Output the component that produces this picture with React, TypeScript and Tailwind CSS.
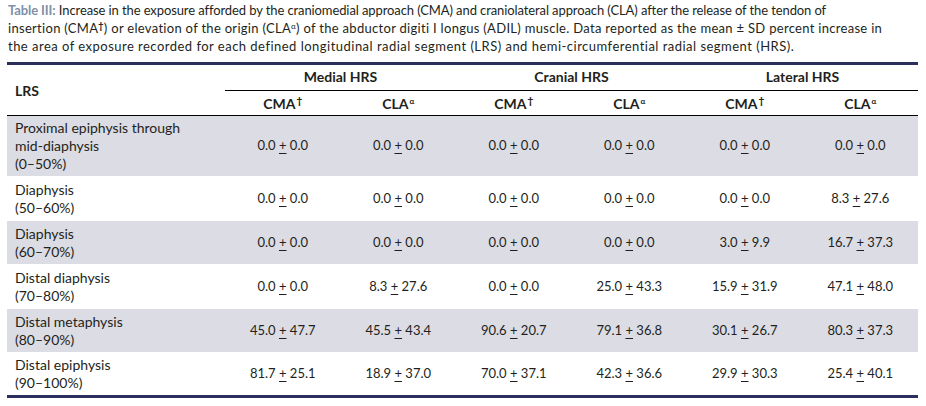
import React from "react";

type Row = {
  label: string[];
  vals: [string, string][];
  shaded?: boolean;
};

const Z: [string, string] = ["0.0", "0.0"];

const ROWS: Row[] = [
  { label: ["Proximal epiphysis through", "mid-diaphysis", "(0–50%)"], vals: [Z, Z, Z, Z, Z, Z], shaded: true },
  { label: ["Diaphysis", "(50–60%)"], vals: [Z, Z, Z, Z, Z, ["8.3", "27.6"]] },
  { label: ["Diaphysis", "(60–70%)"], vals: [Z, Z, Z, Z, ["3.0", "9.9"], ["16.7", "37.3"]], shaded: true },
  {
    label: ["Distal diaphysis", "(70–80%)"],
    vals: [Z, ["8.3", "27.6"], Z, ["25.0", "43.3"], ["15.9", "31.9"], ["47.1", "48.0"]],
  },
  {
    label: ["Distal metaphysis", "(80–90%)"],
    vals: [["45.0", "47.7"], ["45.5", "43.4"], ["90.6", "20.7"], ["79.1", "36.8"], ["30.1", "26.7"], ["80.3", "37.3"]],
    shaded: true,
  },
  {
    label: ["Distal epiphysis", "(90–100%)"],
    vals: [["81.7", "25.1"], ["18.9", "37.0"], ["70.0", "37.1"], ["42.3", "36.6"], ["29.9", "30.3"], ["25.4", "40.1"]],
  },
];

const GROUPS = ["Medial HRS", "Cranial HRS", "Lateral HRS"];

function Dagger() {
  return <span className="relative -top-[5px] ml-[1px] inline-block text-[10px] leading-none font-black">†</span>;
}

function Alpha() {
  return <span className="relative -top-[5px] ml-[1px] inline-block text-[8px] leading-none font-bold">α</span>;
}

function Value({ v }: { v: [string, string] }) {
  return (
    <span className="whitespace-nowrap">
      {v[0]} <span className="underline decoration-1 underline-offset-[3px]">+</span> {v[1]}
    </span>
  );
}

export default function App() {
  return (
    <div className="w-[926px] h-[406px] overflow-hidden bg-white px-[7px] text-[#231f20] font-['Lato',sans-serif] text-[13px]">
      {/* caption */}
      <div className="pl-[1px] pt-[1px] leading-[18px]">
        <div className="whitespace-nowrap tracking-[-0.1px]">
          <span className="font-bold text-[#8190a8]">Table III:</span> Increase in the exposure afforded by the
          craniomedial approach (CMA) and craniolateral approach (CLA) after the release of the tendon of
        </div>
        <div className="whitespace-nowrap tracking-[0.3px]">
          insertion (CMA<span className="relative -top-[4px] text-[9px] font-black leading-none">†</span>) or
          elevation of the origin (CLA<span className="relative -top-[4px] text-[8px] leading-none">α</span>) of
          the abductor digiti I longus (ADIL) muscle. Data reported as the mean ± SD percent increase in
        </div>
        <div className="whitespace-nowrap tracking-[0.48px]">
          the area of exposure recorded for each defined longitudinal radial segment (LRS) and hemi-circumferential
          radial segment (HRS).
        </div>
      </div>

      <table className="mt-[7px] w-[911px] table-fixed border-collapse border-t-[3px] border-b-[3px] border-[#2c2f5e]">
        <colgroup>
          <col className="w-[218px]" />
          <col />
          <col />
          <col />
          <col />
          <col />
          <col />
        </colgroup>
        <thead className="text-[14px]">
          <tr className="h-[27px]">
            <th rowSpan={2} className="border-b border-black pl-[8px] text-left align-middle font-bold">
              LRS
            </th>
            {GROUPS.map((g) => (
              <th key={g} colSpan={2} className="border-b border-black pb-[2px] text-center align-middle font-bold">
                {g}
              </th>
            ))}
          </tr>
          <tr className="h-[25px]">
            {GROUPS.map((g) => (
              <React.Fragment key={g}>
                <th className="border-b border-black pt-[1px] text-center font-bold">
                  CMA
                  <Dagger />
                </th>
                <th className="border-b border-black pt-[1px] text-center font-bold">
                  CLA
                  <Alpha />
                </th>
              </React.Fragment>
            ))}
          </tr>
        </thead>
        <tbody>
          {ROWS.map((r, i) => (
            <tr
              key={i}
              className={`${r.shaded ? "bg-[#dcdce4]" : "bg-white"} ${i === 0 ? "h-[61px]" : "h-[44px]"} border-b border-white`}
            >
              <td className="pl-[8px] align-middle text-[14px] leading-[18px]">
                {r.label.map((l) => (
                  <div key={l}>{l}</div>
                ))}
              </td>
              {r.vals.map((v, j) => (
                <td key={j} className="text-center align-middle">
                  <Value v={v} />
                </td>
              ))}
            </tr>
          ))}
        </tbody>
      </table>
    </div>
  );
}
